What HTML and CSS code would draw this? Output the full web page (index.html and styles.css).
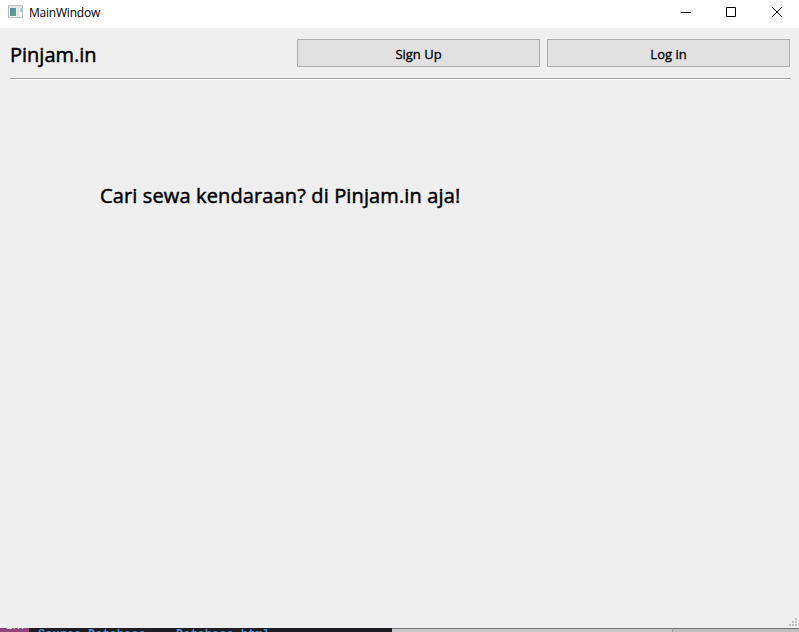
FILE: index.html
```html
<!DOCTYPE html>
<html lang="id">
<head>
<meta charset="utf-8">
<title>MainWindow</title>
<link rel="stylesheet" href="styles.css">
</head>
<body>
<div class="window">
  <header class="titlebar">
    <svg class="app-icon" width="16" height="14" viewBox="0 0 16 14" shape-rendering="crispEdges">
      <defs>
        <linearGradient id="pane" x1="0" y1="0" x2="1" y2="1">
          <stop offset="0" stop-color="#5286b5"/>
          <stop offset="1" stop-color="#59aa7a"/>
        </linearGradient>
      </defs>
      <path fill="#b9bcc1" d="M0 0h15v13H0z"/>
      <path fill="#f6f6f7" d="M1 1h13v11H1z"/>
      <path fill="#e5e6e8" d="M1 1h13v2H1z"/>
      <path fill="url(#pane)" d="M2 3h6v8H2z"/>
      <path fill="#e2e3e5" d="M9 3h2v8H9z"/>
      <path fill="#a8cdc8" d="M12 3h2v4h-2z"/>
    </svg>
    <span class="caption">MainWindow</span>
    <div class="controls">
      <svg width="10" height="10" viewBox="0 0 10 10"><path fill="#000" d="M0 5h10v1H0z"/></svg>
      <svg width="10" height="10" viewBox="0 0 10 10"><path fill="none" stroke="#000" d="M.5.5h9v9h-9z"/></svg>
      <svg class="close" width="10" height="10" viewBox="0 0 10 10"><path fill="none" stroke="#000" d="M0 0l10 10M10 0L0 10"/></svg>
    </div>
  </header>
  <main class="content">
    <nav class="nav">
      <span class="brand">Pinjam.in</span>
      <button class="btn">Sign Up</button>
      <button class="btn">Log in</button>
    </nav>
    <div class="rule"></div>
    <h1 class="headline">Cari sewa kendaraan? di Pinjam.in aja!</h1>
    <svg class="grip" width="8" height="8" viewBox="0 0 8 8" shape-rendering="crispEdges"><path fill="#bfbfbf" d="M6 0h2v2H6zM3 3h2v2H3zM6 3h2v2H6zM0 6h2v2H0zM3 6h2v2H3zM6 6h2v2H6z"/></svg>
  </main>
</div>
<footer class="behind">
  <div class="tag"><span>Em</span></div>
  <div class="code"><span class="word first">Source</span><span class="word second">Database</span><span class="word third">Database.html</span></div>
  <div class="panel"></div>
  <div class="panel side"></div>
</footer>
</body>
</html>
```

FILE: styles.css
```css
* { box-sizing: border-box; }
body {
  margin: 0;
  width: 799px;
  height: 632px;
  overflow: hidden;
  display: flex;
  flex-direction: column;
  font-family: "Open Sans", "Noto Sans", sans-serif;
  color: #000;
}
.window { height: 628px; display: flex; flex-direction: column; }
.titlebar { height: 28px; display: flex; background: #fff; padding-left: 8px; }
.app-icon { margin-top: 5px; }
.caption { font-size: 12px; line-height: 16px; letter-spacing: -0.22px; margin: 5px 0 0 5px; white-space: nowrap; }
.controls { margin-left: auto; display: flex; gap: 35px; padding: 7px 17px 0 0; }
.close { margin-left: 1px; }
.content { flex: 1; background: #efefef; padding: 11px 9px 0 10px; position: relative; }
.nav { display: flex; height: 28px; }
.brand { width: 287px; font-size: 20px; line-height: 28px; padding-top: 2px; white-space: nowrap; -webkit-text-stroke: 0.5px #000; }
.btn {
  width: 243px;
  height: 28px;
  padding: 2px 0 0;
  border: 1px solid #adadad;
  background: #e1e1e1;
  font: 13px/18px "Open Sans", "Noto Sans", sans-serif;
  color: #000;
  -webkit-text-stroke: 0.3px #000;
}
.btn + .btn { margin-left: 7px; }
.rule { height: 2px; width: 781px; margin-top: 11px; background: #fff; border-top: 1px solid #a0a0a0; }
.headline { margin: 102px 0 0 90px; font-size: 20px; line-height: 28px; font-weight: 400; letter-spacing: 0.13px; white-space: nowrap; -webkit-text-stroke: 0.5px #000; }
.grip { position: absolute; right: 2px; bottom: 2px; }
.behind { height: 4px; display: flex; overflow: hidden; background: #1e1e22; }
.tag { width: 29px; background: #8f4579; overflow: hidden; color: #ddd; font: 12px/12px "Open Sans", sans-serif; }
.tag span { display: block; margin: -9px 0 0 6px; }
.code { width: 363px; display: flex; overflow: hidden; color: #4d8fc4; font: bold 12px/14px "Liberation Mono", monospace; }
.word { margin-top: 0; }
.first { width: 50px; margin-left: 9px; }
.second { width: 88px; }
.panel { width: 280px; background: #c8c8c8; border-top: 1px solid #707070; }
.side { width: 127px; background: #c0c0c0; border-left: 1px solid #a0a0a0; }
```
